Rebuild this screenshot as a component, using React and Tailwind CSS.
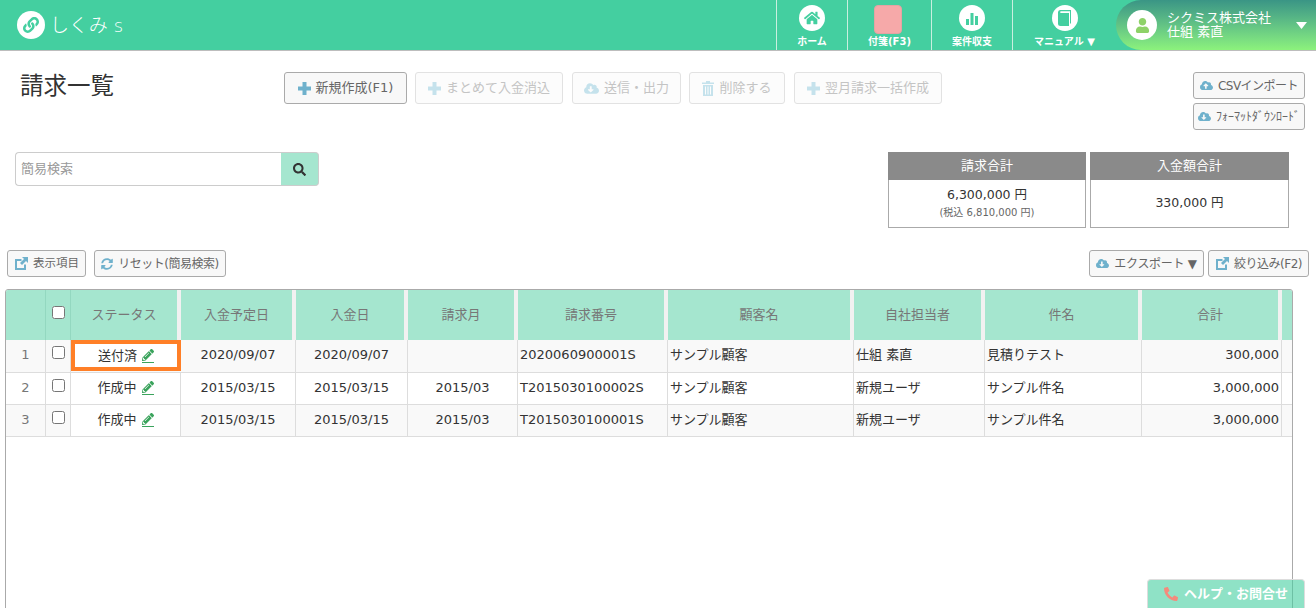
import { FaCloudDownloadAlt, FaCloudUploadAlt, FaHome, FaLink, FaPencilAlt, FaPhone, FaSearch, FaSyncAlt, FaUser } from 'react-icons/fa';

const font = { fontFamily: '"DejaVu Sans", "Noto Sans CJK JP", sans-serif' };

const columns = ['ステータス', '入金予定日', '入金日', '請求月', '請求番号', '顧客名', '自社担当者', '件名', '合計'];

const rows = [
    ['送付済', '2020/09/07', '2020/09/07', '', '2020060900001S', 'サンプル顧客', '仕組 素直', '見積りテスト', '300,000'],
    ['作成中', '2015/03/15', '2015/03/15', '2015/03', 'T2015030100002S', 'サンプル顧客', '新規ユーザ', 'サンプル件名', '3,000,000'],
    ['作成中', '2015/03/15', '2015/03/15', '2015/03', 'T2015030100001S', 'サンプル顧客', '新規ユーザ', 'サンプル件名', '3,000,000'],
];

const gridCols = 'grid grid-cols-[40px_25px_110px_115px_112px_110px_150px_186px_131px_157px_140px_10px]';

function PlusIcon() {
    return (
        <svg width="13" height="13" viewBox="0 0 13 13" fill="currentColor" className="block">
            <path d="M4.500 0h4v4.500H13v4H8.500V13h-4V8.500H0v-4h4.500z" />
        </svg>
    );
}

function TrashIcon() {
    return (
        <svg width="12" height="15" viewBox="0 0 12 15" fill="currentColor" className="block">
            <path d="M4 0h4v1.500h4V3H0V1.500h4zM1 4h10v11H1zm2 1.500V13.500h1V5.500zm2.500 0V13.500h1V5.500zm2.500 0V13.500h1V5.500z" fillRule="evenodd" />
        </svg>
    );
}

function NewWindowIcon() {
    return (
        <svg width="14" height="13" viewBox="0 0 14 13" fill="currentColor" className="block">
            <path d="M1 2h6.500v2H3v7h7V7.500h2V13H1z" />
            <path d="M8 0h6v6l-2-2-4 4-2-2 4-4z" />
        </svg>
    );
}

function Caret() {
    return (
        <svg width="11" height="7" viewBox="0 0 11 7" fill="currentColor" className="block">
            <path d="M0 0h11L5.500 7z" />
        </svg>
    );
}

function NavItem({ width, label, children }) {
    return (
        <div className={`${width} flex flex-col items-center border-l border-[#c9efe0] pt-[5px]`}>
            <div className="h-[27px] flex items-start justify-center">{children}</div>
            <span className="mt-[3px] text-[10px] leading-[14px] font-bold text-white whitespace-nowrap">{label}</span>
        </div>
    );
}

function Circle({ children }) {
    return <div className="w-[26px] h-[26px] rounded-full bg-white flex items-center justify-center text-[#44cfa0]">{children}</div>;
}

function Btn({ icon, children, disabled, className = '' }) {
    return (
        <button className={`flex items-center justify-center gap-[5px] rounded-[3px] border whitespace-nowrap ${disabled ? 'border-[#e2e2e2] bg-[#fcfcfc] text-[#c4c4c4]' : 'border-[#aaaaaa] bg-[#f8f8f8] text-[#666666]'} ${className}`}>
            <span className={disabled ? 'text-[#c5e2ec]' : 'text-[#6fb1cc]'}>{icon}</span>
            {children}
        </button>
    );
}

export default function App() {
    return (
        <div style={font} className="relative h-[608px] overflow-hidden bg-white text-[13px] text-[#333333]">
            <header className="h-[51px] flex justify-between bg-[#44cfa0] border-b border-[#bdbdbd]">
                <div className="flex items-center pl-[17px] text-white">
                    <div className="w-[28px] h-[28px] rounded-full bg-white flex items-center justify-center text-[#44cfa0]">
                        <FaLink size={16} />
                    </div>
                    <span className="ml-[5px] text-[19px] font-light">しくみ</span>
                    <span className="ml-[6px] text-[18px] font-light">s</span>
                </div>
                <nav className="flex">
                    <NavItem width="w-[71px]" label="ホーム">
                        <Circle><FaHome size={16} /></Circle>
                    </NavItem>
                    <NavItem width="w-[84px]" label="付箋(F3)">
                        <div className="mr-[4px] w-[28px] h-[29px] rounded-[4px] bg-[#f6a9a9] border border-[#e4a3a3]"></div>
                    </NavItem>
                    <NavItem width="w-[81px]" label="案件収支">
                        <Circle>
                            <svg width="14" height="14" viewBox="0 0 14 14" fill="currentColor">
                                <rect x="1" y="8" width="3" height="6" />
                                <rect x="5.500" y="2" width="3" height="12" />
                                <rect x="10" y="5" width="3" height="9" />
                            </svg>
                        </Circle>
                    </NavItem>
                    <NavItem width="w-[104px]" label="マニュアル ▼">
                        <Circle>
                            <svg width="14" height="16" viewBox="0 0 14 16" fill="currentColor">
                                <path d="M2 0h11v13.500H12V1.300H2.600A1.300 1.300 0 0 0 2.600 3H11v13H2.500A2.500 2.500 0 0 1 0 13.500V2.200A2.200 2.200 0 0 1 2 0z" />
                            </svg>
                        </Circle>
                    </NavItem>
                    <div className="w-[200px] flex items-center rounded-l-[36px] bg-gradient-to-b from-[#3a9585] to-[#8cf27c] pl-[11px] pr-[9px]">
                        <div className="w-[30px] h-[30px] rounded-full bg-white flex items-center justify-center text-[#8ed268]">
                            <FaUser size={15} />
                        </div>
                        <div className="ml-[10px] flex-1 text-white text-[13px] leading-[14px]">
                            <div>シクミス株式会社</div>
                            <div>仕組 素直</div>
                        </div>
                        <span className="text-white"><Caret /></span>
                    </div>
                </nav>
            </header>

            <section className="flex h-[79px] pt-[21px] pl-[20px] pr-[11px]">
                <h1 className="w-[264px] text-[23.500px] leading-[28px] font-normal text-[#333333]">請求一覧</h1>
                <div className="flex items-start">
                    <Btn icon={<PlusIcon />} className="w-[123px] h-[32px]">新規作成(F1)</Btn>
                    <Btn disabled icon={<PlusIcon />} className="ml-[8px] w-[148px] h-[32px]">まとめて入金消込</Btn>
                    <Btn disabled icon={<FaCloudDownloadAlt size={15} />} className="ml-[9px] w-[109px] h-[32px]">送信・出力</Btn>
                    <Btn disabled icon={<TrashIcon />} className="ml-[8px] w-[96px] h-[32px]">削除する</Btn>
                    <Btn disabled icon={<PlusIcon />} className="ml-[9px] w-[148px] h-[32px]">翌月請求一括作成</Btn>
                </div>
                <div className="ml-auto flex flex-col gap-[4px]">
                    <Btn icon={<FaCloudUploadAlt size={13} />} className="w-[112px] h-[27px] text-[12px] tracking-[-0.5px]">CSVインポート</Btn>
                    <Btn icon={<FaCloudDownloadAlt size={13} />} className="w-[112px] h-[27px] text-[12px]">ﾌｫｰﾏｯﾄﾀﾞｳﾝﾛｰﾄﾞ</Btn>
                </div>
            </section>

            <section className="flex justify-between h-[120px] pt-[22px] pl-[15px] pr-[27px]">
                <div className="flex w-[304px] h-[34px]">
                    <div className="flex-1 flex items-center pl-[5px] border border-[#cccccc] border-r-0 rounded-l-[4px] text-[13px] text-[#999999]">簡易検索</div>
                    <div className="w-[38px] flex items-center justify-center rounded-r-[4px] border border-[#cccccc] border-l-0 bg-[#a5e6cf] text-[#333333]">
                        <FaSearch size={13} />
                    </div>
                </div>
                <div className="flex gap-[4px] text-center">
                    <div className="w-[198px] h-[76px] flex flex-col">
                        <div className="h-[28px] leading-[28px] bg-[#8a8a8a] text-white">請求合計</div>
                        <div className="flex-1 flex flex-col justify-center border border-t-0 border-[#aaaaaa]">
                            <div className="text-[12.500px] leading-[20px] -mt-[2px]">6,300,000 円</div>
                            <div className="text-[10px] leading-[16px] text-[#666666]">(税込 6,810,000 円)</div>
                        </div>
                    </div>
                    <div className="w-[199px] h-[76px] flex flex-col">
                        <div className="h-[28px] leading-[28px] bg-[#8a8a8a] text-white">入金額合計</div>
                        <div className="flex-1 flex items-center justify-center border border-t-0 border-[#aaaaaa] text-[12.500px]">330,000 円</div>
                    </div>
                </div>
            </section>

            <section className="flex justify-between h-[39px] pl-[7px] pr-[7px]">
                <div className="flex gap-[8px]">
                    <Btn icon={<NewWindowIcon />} className="w-[79px] h-[27px] text-[11.500px]">表示項目</Btn>
                    <Btn icon={<FaSyncAlt size={12} />} className="w-[132px] h-[27px] text-[12px] tracking-[-0.5px]">リセット(簡易検索)</Btn>
                </div>
                <div className="flex gap-[4px]">
                    <Btn icon={<FaCloudDownloadAlt size={13} />} className="w-[115px] h-[27px] text-[12px] tracking-[-0.3px]">エクスポート ▼</Btn>
                    <Btn icon={<NewWindowIcon />} className="w-[101px] h-[27px] text-[12px] tracking-[-0.5px]">絞り込み(F2)</Btn>
                </div>
            </section>

            <section className="ml-[5px] w-[1288px] h-[400px] border border-[#aaaaaa] rounded-t-[3px] overflow-hidden">
                <div className={`${gridCols} h-[50px] bg-[#a5e6cf] text-[#777777]`}>
                    <div className="border-r border-[#93d8c0]"></div>
                    <div className="flex justify-center pt-[16px] border-r border-[#93d8c0]">
                        <input type="checkbox" className="w-[13px] h-[13px]" />
                    </div>
                    {columns.map((label) => (
                        <div key={label} className="flex items-center justify-center border-r-[4px] border-[#f1f1f1] pb-px">{label}</div>
                    ))}
                    <div></div>
                </div>
                {rows.map((row, i) => (
                    <div key={i} className={`${gridCols} ${i === 0 ? 'h-[33px]' : 'h-[32px]'} border-b border-[#dddddd] ${i % 2 === 0 ? 'bg-[#f9f9f9]' : 'bg-white'}`}>
                        <div className="flex items-center justify-center pb-[2px] border-r border-[#dddddd] text-[#777777]">{i + 1}</div>
                        <div className="flex justify-center pt-[6px] border-r border-[#dddddd]">
                            <input type="checkbox" className="w-[13px] h-[13px]" />
                        </div>
                        <div className={`flex items-center justify-center gap-[5px] bg-white ${i === 0 ? 'self-start h-[31px] border-[4px] border-[#ff7f27]' : 'pb-[2px] border-r border-[#dddddd]'}`}>
                            {row[0]}
                            <span className="text-[#3aa35c] border-b border-[#3aa35c] pb-px"><FaPencilAlt size={12} /></span>
                        </div>
                        {row.slice(1).map((cell, j) => (
                            <div key={j} className={`flex items-center border-r border-[#dddddd] px-[2px] pb-[2px] whitespace-nowrap ${j < 3 ? 'justify-center' : ''} ${j === 7 ? 'justify-end' : ''}`}>{cell}</div>
                        ))}
                        <div></div>
                    </div>
                ))}
            </section>

            <div className="absolute right-[11px] bottom-0 w-[158px] h-[29px] flex items-center justify-center gap-[6px] rounded-t-[4px] border border-b-0 border-[#dddddd] bg-[#44cfa0]/60 text-white font-bold">
                <span className="text-[#f58a7c] -scale-x-100"><FaPhone size={14} /></span>
                ヘルプ・お問合せ
            </div>
        </div>
    );
}
